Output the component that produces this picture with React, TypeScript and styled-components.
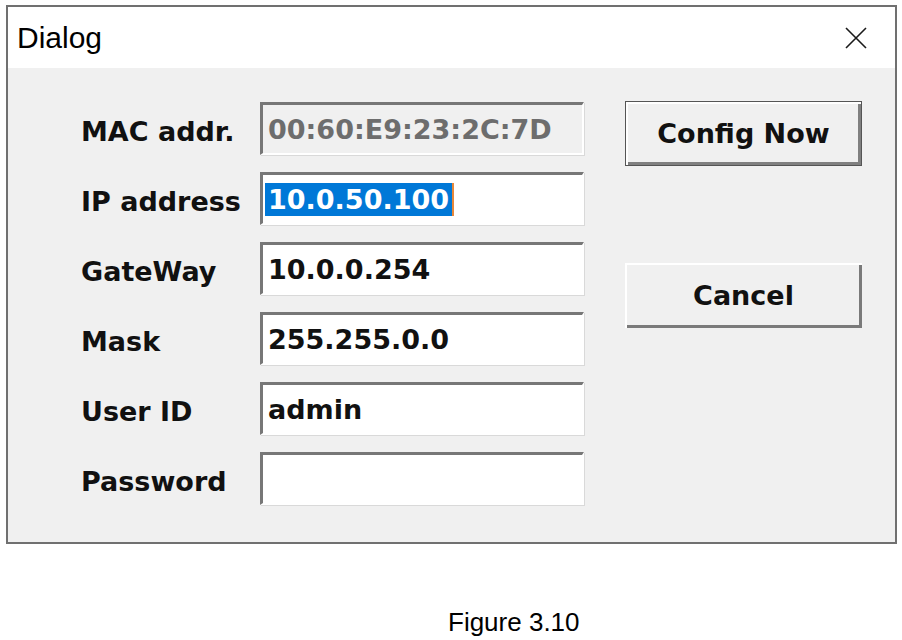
import styled, { createGlobalStyle, css } from "styled-components";

const GlobalStyle = createGlobalStyle`
  body {
    margin: 0;
    background: #ffffff;
    font-family: "Liberation Sans", Arial, sans-serif;
  }
`;

interface Field {
  label: string;
  value: string;
  disabled?: boolean;
  selected?: boolean;
}

const fields: Field[] = [
  { label: "MAC addr.", value: "00:60:E9:23:2C:7D", disabled: true },
  { label: "IP address", value: "10.0.50.100", selected: true },
  { label: "GateWay", value: "10.0.0.254" },
  { label: "Mask", value: "255.255.0.0" },
  { label: "User ID", value: "admin" },
  { label: "Password", value: "" },
];

export default function App() {
  return (
    <Page>
      <GlobalStyle />
      <Window>
        <TitleBar>
          <Title>Dialog</Title>
          <CloseButton aria-label="Close">
            <svg width="22" height="22" viewBox="0 0 22 22">
              <path d="M1 1 L21 21 M21 1 L1 21" stroke="#1a1a1a" strokeWidth="1.6" fill="none" />
            </svg>
          </CloseButton>
        </TitleBar>
        <Body>
          <Form>
            {fields.map((f) => (
              <Row key={f.label}>
                <Label>{f.label}</Label>
                <TextBox disabled={f.disabled}>
                  {f.selected ? <Selection>{f.value}</Selection> : f.value}
                </TextBox>
              </Row>
            ))}
          </Form>
          <Buttons>
            <Button isDefault>Config Now</Button>
            <Button>Cancel</Button>
          </Buttons>
        </Body>
      </Window>
      <Caption>Figure 3.10</Caption>
    </Page>
  );
}

const Page = styled.div`
  padding: 5px 0 0 6px;
`;

const Window = styled.div`
  width: 891px;
  height: 539px;
  box-sizing: border-box;
  border: 2px solid #707070;
  display: flex;
  flex-direction: column;
`;

const TitleBar = styled.div`
  height: 61px;
  flex: none;
  background: #ffffff;
  display: flex;
  align-items: center;
  justify-content: space-between;
  padding: 0 28px 0 9px;
`;

const Title = styled.span`
  font-size: 30px;
  color: #000000;
`;

const CloseButton = styled.div`
  width: 22px;
  height: 22px;
  display: flex;
`;

const Body = styled.div`
  flex: 1;
  background: #f0f0f0;
  display: flex;
  align-items: flex-start;
  padding: 34px 0 0 73px;
  gap: 41px;
  font-family: "DejaVu Sans", Verdana, sans-serif;
  font-weight: bold;
  font-size: 27px;
  color: #111111;
`;

const Form = styled.div`
  display: flex;
  flex-direction: column;
  gap: 17px;
`;

const Row = styled.div`
  display: flex;
  align-items: center;
  height: 53px;
`;

const Label = styled.span`
  width: 179px;
  padding-top: 6px;
`;

const TextBox = styled.div<{ disabled?: boolean }>`
  width: 324px;
  height: 53px;
  box-sizing: border-box;
  display: flex;
  align-items: center;
  padding-left: 5px;
  border-top: 3px solid #777777;
  border-left: 3px solid #777777;
  border-right: 2px solid #ffffff;
  border-bottom: 2px solid #ffffff;
  box-shadow: 1px 1px 0 #d9d9d9;
  background: ${(p) => (p.disabled ? "#f0f0f0" : "#ffffff")};
  color: ${(p) => (p.disabled ? "#6d6d6d" : "#111111")};
  white-space: nowrap;
`;

const Selection = styled.span`
  margin-left: -3px;
  padding: 0 3px;
  line-height: 33px;
  background: #0078d7;
  color: #ffffff;
  box-shadow: 2px 0 0 #e8883a;
`;

const Buttons = styled.div`
  display: flex;
  flex-direction: column;
  gap: 97px;
  margin-top: -1px;
`;

const Button = styled.button<{ isDefault?: boolean }>`
  width: 237px;
  height: 65px;
  box-sizing: border-box;
  background: #f0f0f0;
  font: inherit;
  color: #111111;
  padding: 0;
  border: none;
  box-shadow: inset 2px 2px 0 #ffffff, inset -3px -3px 0 #7a7a7a;
  ${(p) =>
    p.isDefault &&
    css`
      border: 1px solid #555555;
      box-shadow: inset 2px 2px 0 #ffffff, inset -3px -3px 0 #808080;
    `}
`;

const Caption = styled.div`
  margin-top: 63px;
  padding-left: 442px;
  font-size: 26px;
  line-height: 30px;
  color: #000000;
`;
